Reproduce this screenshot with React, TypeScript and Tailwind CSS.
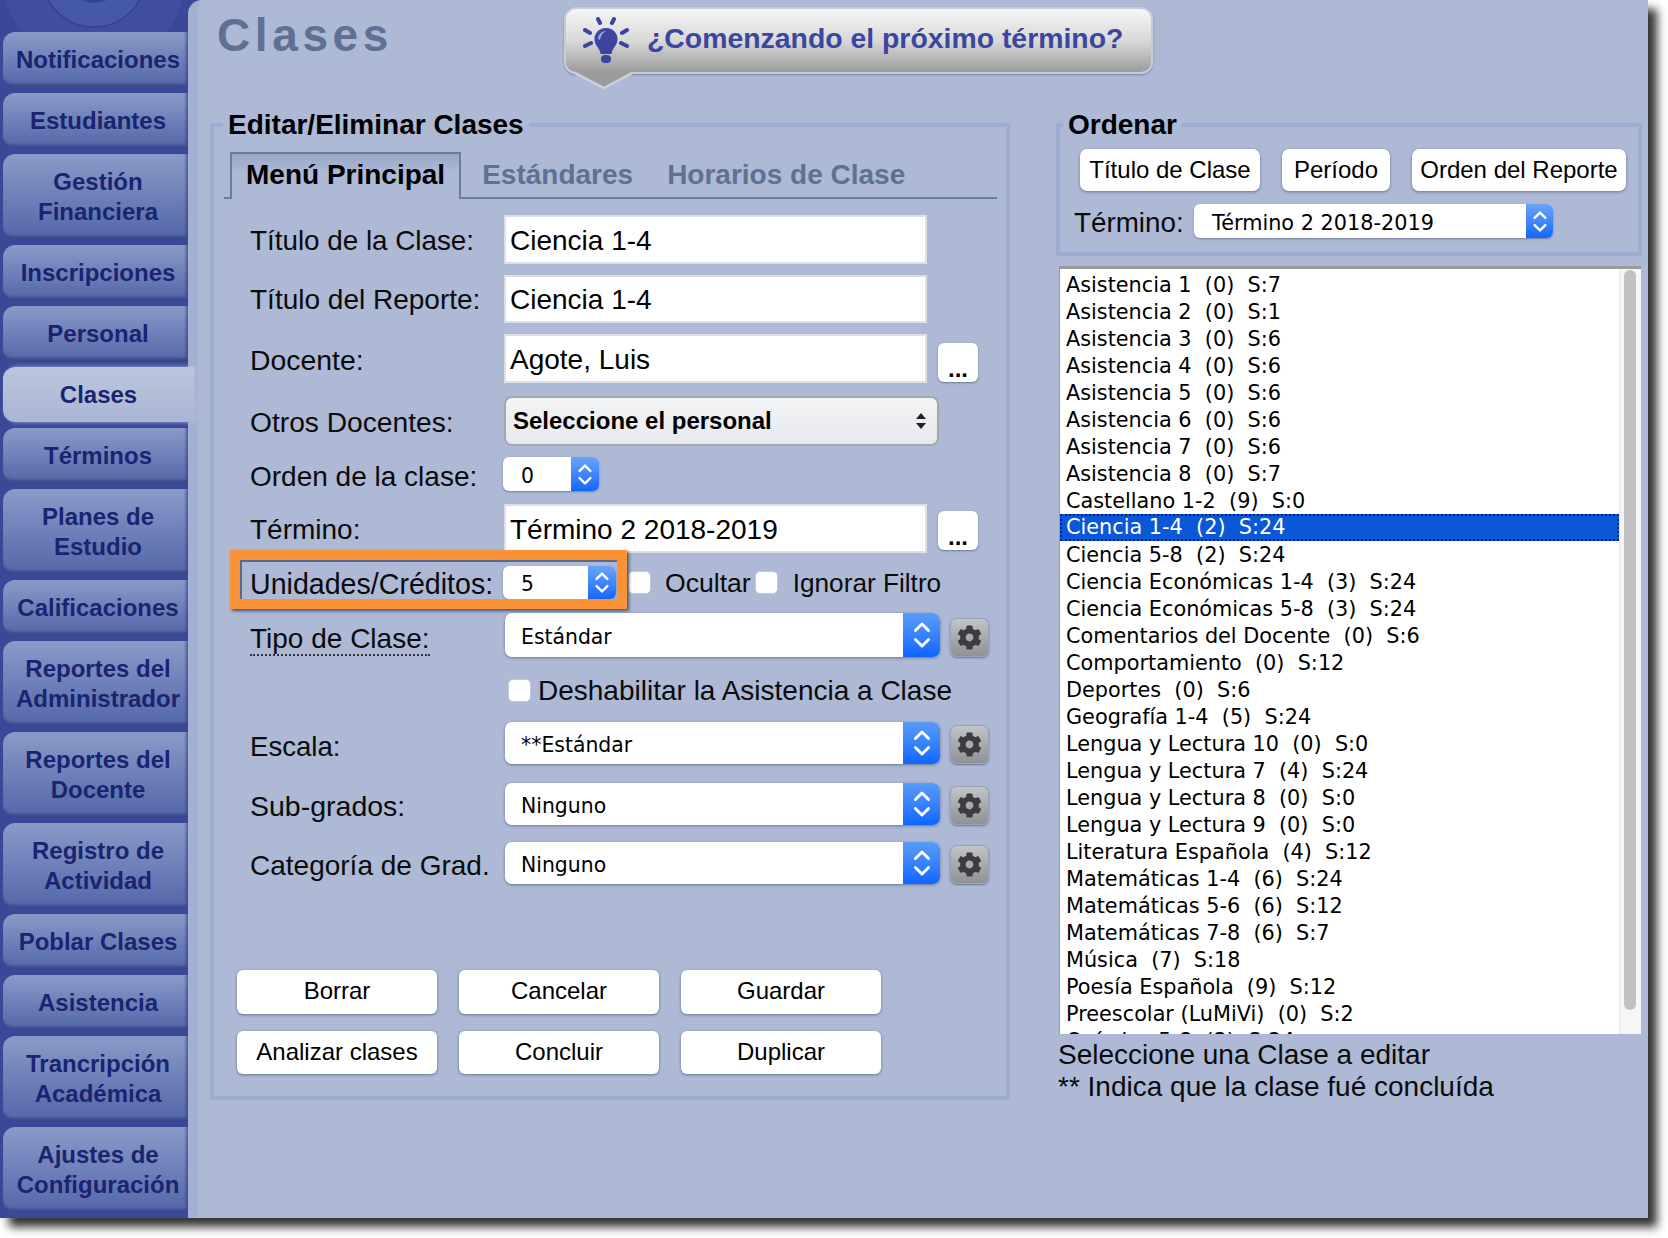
import React from "react";
import { FaCog } from "react-icons/fa";

const NAV: { label: string[]; active?: boolean }[] = [
  { label: ["Notificaciones"] },
  { label: ["Estudiantes"] },
  { label: ["Gestión", "Financiera"] },
  { label: ["Inscripciones"] },
  { label: ["Personal"] },
  { label: ["Clases"], active: true },
  { label: ["Términos"] },
  { label: ["Planes de", "Estudio"] },
  { label: ["Calificaciones"] },
  { label: ["Reportes del", "Administrador"] },
  { label: ["Reportes del", "Docente"] },
  { label: ["Registro de", "Actividad"] },
  { label: ["Poblar Clases"] },
  { label: ["Asistencia"] },
  { label: ["Trancripción", "Académica"] },
  { label: ["Ajustes de", "Configuración"] },
];

const LIST = [
  "Asistencia 1  (0)  S:7",
  "Asistencia 2  (0)  S:1",
  "Asistencia 3  (0)  S:6",
  "Asistencia 4  (0)  S:6",
  "Asistencia 5  (0)  S:6",
  "Asistencia 6  (0)  S:6",
  "Asistencia 7  (0)  S:6",
  "Asistencia 8  (0)  S:7",
  "Castellano 1-2  (9)  S:0",
  "Ciencia 1-4  (2)  S:24",
  "Ciencia 5-8  (2)  S:24",
  "Ciencia Económicas 1-4  (3)  S:24",
  "Ciencia Económicas 5-8  (3)  S:24",
  "Comentarios del Docente  (0)  S:6",
  "Comportamiento  (0)  S:12",
  "Deportes  (0)  S:6",
  "Geografía 1-4  (5)  S:24",
  "Lengua y Lectura 10  (0)  S:0",
  "Lengua y Lectura 7  (4)  S:24",
  "Lengua y Lectura 8  (0)  S:0",
  "Lengua y Lectura 9  (0)  S:0",
  "Literatura Española  (4)  S:12",
  "Matemáticas 1-4  (6)  S:24",
  "Matemáticas 5-6  (6)  S:12",
  "Matemáticas 7-8  (6)  S:7",
  "Música  (7)  S:18",
  "Poesía Española  (9)  S:12",
  "Preescolar (LuMiVi)  (0)  S:2",
  "Química 5-8  (3)  S:24",
];

function Chevrons({ small }: { small?: boolean }) {
  return (
    <svg
      viewBox="0 0 20 28"
      className={small ? "h-[25px] w-[18px]" : "h-[32px] w-[22px]"}
      fill="none"
      stroke="white"
      strokeWidth="2.6"
      strokeLinecap="round"
      strokeLinejoin="round"
    >
      <polyline points="4,10 10,4 16,10" />
      <polyline points="4,18 10,24 16,18" />
    </svg>
  );
}

function Spin({ value, className }: { value: string; className: string }) {
  return (
    <div className={`flex h-full rounded-[6px] bg-white shadow-[0_1px_2px_rgba(40,50,90,0.45)] ${className}`}>
      <div className="flex-1 self-center pt-[4px] pl-[18px] text-[20.4px] leading-none font-['DejaVu_Sans',sans-serif] text-black">
        {value}
      </div>
      <div className="flex w-[28px] items-center justify-center rounded-r-[6px] bg-linear-to-b from-[#6aa3f8] to-[#0f66fb]">
        <Chevrons small />
      </div>
    </div>
  );
}

function Select({ value }: { value: string }) {
  return (
    <div className="ml-[1px] flex h-full w-[435px] rounded-[7px] bg-white shadow-[0_1px_3px_rgba(40,50,90,0.5)]">
      <div className="flex-1 self-center pt-[5px] pl-[16px] text-[20.4px] font-['DejaVu_Sans',sans-serif] text-black">
        {value}
      </div>
      <div className="flex w-[37px] items-center justify-center rounded-r-[7px] bg-linear-to-b from-[#5a9bf8] to-[#0a66ff]">
        <Chevrons />
      </div>
    </div>
  );
}

function Gear() {
  return (
    <div className="ml-[10px] flex h-[39px] w-[39px] shrink-0 items-center justify-center self-end rounded-[7px] border border-[#98a2b8] bg-linear-to-b from-[#c2c4c8] to-[#8f9195] shadow-[0_1px_2px_rgba(40,50,90,0.5)]">
      <FaCog className="text-[#3c3c3e]" size={25} />
    </div>
  );
}

function DotsButton({ className }: { className: string }) {
  return (
    <div className={`ml-[11px] flex h-[39px] w-[40px] items-end justify-center rounded-[6px] bg-white text-[24px] leading-[26px] font-bold text-black shadow-[0_1px_2px_rgba(40,50,90,0.5)] ${className}`}>
      ...
    </div>
  );
}

function Field({ value }: { value: string }) {
  return (
    <div className="flex h-full w-[423px] items-center border-2 border-[#dcdfe6] bg-white pt-[2px] pl-[4px] text-[28px] text-black">
      {value}
    </div>
  );
}

function Label({ children, className = "text-[28px]" }: { children: React.ReactNode; className?: string }) {
  return <div className={`w-[254px] shrink-0 pt-[2px] leading-[32px] whitespace-nowrap text-[#0b0b0b] ${className}`}>{children}</div>;
}

function Check({ className = "" }: { className?: string }) {
  return <div className={`h-[23px] w-[23px] shrink-0 rounded-[5px] border border-[#c3c9d8] bg-white ${className}`} />;
}

function ActionButton({ children }: { children: string }) {
  return (
    <div className="flex h-full w-[200px] items-center justify-center rounded-[6px] bg-white pb-[2px] text-[24px] text-black shadow-[0_1px_3px_rgba(40,50,90,0.5)]">
      {children}
    </div>
  );
}

function SortButton({ children, className }: { children: string; className: string }) {
  return (
    <div className={`flex h-[42px] items-center justify-center rounded-[7px] bg-white pb-[1px] text-[24px] text-black shadow-[0_1px_3px_rgba(40,50,90,0.5)] ${className}`}>
      {children}
    </div>
  );
}

function Bulb() {
  return (
    <svg viewBox="0 0 46 47" className="h-[47px] w-[46px] shrink-0" fill="#3b45a0">
      <g stroke="#3b45a0" strokeWidth="4" strokeLinecap="round">
        <line x1="15" y1="2" x2="17" y2="6" />
        <line x1="31" y1="2" x2="29" y2="6" />
        <line x1="2" y1="13" x2="7" y2="16" />
        <line x1="44" y1="13" x2="39" y2="16" />
        <line x1="2" y1="29" x2="8" y2="26" />
        <line x1="44" y1="29" x2="38" y2="26" />
      </g>
      <path d="M23 11c-7 0-11.500 5-11.500 11 0 5 3 7.500 4.500 10.500 1 1.500 1.500 3 1.500 4.500h11c0-1.500.5-3 1.500-4.500 1.500-3 4.500-5.500 4.500-10.500 0-6-4.500-11-11.500-11z" />
      <path d="M15 22c0-4 3.500-8 8-8-3 2-5.500 4.500-6 9z" fill="#9ba3dc" />
      <rect x="18" y="38" width="10" height="8" rx="4" />
    </svg>
  );
}

function Legend({ children, className }: { children: string; className: string }) {
  return <legend className={`px-[5px] text-[28px] leading-[30px] font-bold text-black ${className}`}>{children}</legend>;
}

export default function App() {
  return (
    <div className="h-[1238px] w-[1668px] overflow-hidden bg-white font-['Liberation_Sans',Arial,sans-serif]">
      <div className="flex h-[1218px] w-[1648px] bg-[#3a4898] shadow-[9px_9px_9px_rgba(0,0,0,0.8)]">
        {/* Sidebar */}
        <nav className="relative flex w-[188px] shrink-0 flex-col gap-[6px] overflow-visible pt-[32px] pl-[3px]">
          <svg viewBox="0 0 188 32" className="absolute top-0 left-0 h-[32px] w-[188px]">
            <circle cx="94" cy="-25" r="92" fill="#3f4e9f" />
            <circle cx="94" cy="-25" r="52" fill="#4658a8" stroke="#34428f" strokeWidth="1.5" />
            <circle cx="94" cy="-25" r="28" fill="#34428f" />
          </svg>
          {NAV.map((n) => (
            <div
              key={n.label.join(" ")}
              className={
                n.active
                  ? "relative z-10 flex h-[55px] w-[191px] flex-col items-center justify-center rounded-l-[12px] bg-linear-to-b from-[#bcc6de] to-[#a9b6d4] text-center text-[24px] leading-[30px] font-bold text-[#1a2470] shadow-[3px_0_5px_rgba(173,185,213,0.9)]"
                  : n.label.length > 1
                    ? "relative flex h-[85px] w-[185px] flex-col items-center justify-center rounded-l-[12px] bg-linear-to-b from-[#8a9ac8] to-[#5367a8] pl-[5px] text-center text-[24px] leading-[30px] font-bold text-[#1a2470] shadow-[inset_-2px_-3px_3px_rgba(35,45,110,0.55)]"
                    : "relative flex h-[55px] w-[185px] flex-col items-center justify-center rounded-l-[12px] bg-linear-to-b from-[#8a9ac8] to-[#5367a8] pl-[5px] text-center text-[24px] leading-[30px] font-bold text-[#1a2470] shadow-[inset_-2px_-3px_3px_rgba(35,45,110,0.55)]"
              }
            >
              {n.label.map((l) => (
                <span key={l}>{l}</span>
              ))}
            </div>
          ))}
        </nav>

        {/* Main */}
        <main className="flex-1 rounded-tl-[14px] border-l-[10px] border-[#a3b0d2] bg-[#adb9d5] pl-[12px]">
          <header className="flex h-[110px] pt-[7px]">
            <h1 className="ml-[7px] w-[347px] pt-[1px] text-[46px] leading-[55px] font-bold tracking-[4.6px] text-[#5f7193]">Clases</h1>
            <div className="relative flex h-[67px] w-[589px] items-center rounded-[12px] border-2 border-[#c6ccda] bg-linear-to-b from-[#f6f6f6] via-[#d9d9d9] to-[#9c9c9c] pl-[17px] shadow-[0_1px_2px_rgba(60,70,110,0.45)]">
              <Bulb />
              <span className="mb-[5px] ml-[18px] text-[28.4px] font-bold whitespace-nowrap text-[#3a46a0]">¿Comenzando el próximo término?</span>
              <svg viewBox="0 0 57 18" className="absolute top-[63px] left-[9px] h-[18px] w-[57px]">
                <polygon points="0,0 57,0 29,16" fill="#9c9c9c" />
                <polyline points="0,1 29,16 57,1" fill="none" stroke="#ccd1dc" strokeWidth="2.5" />
              </svg>
            </div>
          </header>

          <div className="flex gap-[46px]">
            {/* Left column */}
            <fieldset className="h-[990px] w-[800px] border-4 border-[#9eacd1]">
              <Legend className="ml-[9px]">Editar/Eliminar Clases</Legend>

              <div className="mt-[14px] mr-[9px] ml-[10px] flex h-[45px] items-end gap-[21px] border-b-2 border-[#6b7c9e] pl-[6px] text-[28px] font-bold text-[#5f7193]">
                <div className="-mb-[2px] flex h-[47px] items-center border-2 border-b-0 border-[#6b7c9e] bg-linear-to-b from-[#98a6c6] to-[#adb9d5] to-40% pr-[14px] pb-[3px] pl-[14px] text-black">
                  Menú Principal
                </div>
                <div className="flex h-[45px] items-center">Estándares</div>
                <div className="ml-[13px] flex h-[45px] items-center">Horarios de Clase</div>
              </div>

              <div className="pl-[36px]">
                <div className="mt-[16px] flex h-[49px] items-center">
                  <Label className="text-[27.8px]">Título de la Clase:</Label>
                  <Field value="Ciencia 1-4" />
                </div>
                <div className="mt-[11px] flex h-[48px] items-center">
                  <Label>Título del Reporte:</Label>
                  <Field value="Ciencia 1-4" />
                </div>
                <div className="mt-[11px] flex h-[49px] items-center">
                  <Label className="text-[28.4px]">Docente:</Label>
                  <Field value="Agote, Luis" />
                  <DotsButton className="mt-[8px]" />
                </div>
                <div className="mt-[13px] flex h-[50px] items-center">
                  <Label className="text-[28.2px]">Otros Docentes:</Label>
                  <div className="flex h-full w-[435px] items-center justify-between rounded-[8px] border-2 border-[#a4a7ae] bg-linear-to-b from-[#f3f4f6] to-[#e8e9ec] pr-[10px] pl-[7px] text-[24px] font-bold text-black">
                    <span>Seleccione el personal</span>
                    <svg viewBox="0 0 12 18" className="h-[18px] w-[12px]" fill="#222">
                      <polygon points="6,1 11,7 1,7" />
                      <polygon points="6,17 11,11 1,11" />
                    </svg>
                  </div>
                </div>
                <div className="mt-[11px] flex h-[34px] items-center">
                  <Label className="pt-[5px] text-[28px]">Orden de la clase:</Label>
                  <Spin value="0" className="-ml-[1px] w-[96px]" />
                </div>
                <div className="mt-[13px] flex h-[49px] items-center">
                  <Label>Término:</Label>
                  <Field value="Término 2 2018-2019" />
                  <DotsButton className="mt-[4px]" />
                </div>
                <div className="relative mt-[13px] flex h-[33px] items-center">
                  <div className="pointer-events-none absolute -top-[16px] -left-[20px] z-10 h-[59px] w-[397px] border-[10px] border-[#fa9338] shadow-[2px_2px_3px_rgba(30,40,70,0.7),inset_2px_2px_0_#5a6a8c]" />
                  <Label className="text-[28.6px]">Unidades/Créditos:</Label>
                  <Spin value="5" className="-ml-[1px] w-[113px]" />
                  <Check className="ml-[12px]" />
                  <span className="ml-[14px] pt-[2px] text-[26.6px] text-[#0b0b0b]">Ocultar</span>
                  <Check className="ml-[4px]" />
                  <span className="ml-[15px] pt-[2px] text-[26.2px] text-[#0b0b0b]">Ignorar Filtro</span>
                </div>
                <div className="mt-[14px] flex h-[44px] items-center">
                  <Label className="pt-[7px] text-[28px]">
                    <span className="border-b-2 border-dotted border-[#333]">Tipo de Clase:</span>
                  </Label>
                  <Select value="Estándar" />
                  <Gear />
                </div>
                <div className="mt-[22px] flex h-[23px] items-center pl-[258px]">
                  <Check />
                  <span className="ml-[7px] pt-[1px] text-[28px] whitespace-nowrap text-[#0b0b0b]">Deshabilitar la Asistencia a Clase</span>
                </div>
                <div className="mt-[20px] flex h-[42px] items-center">
                  <Label className="pt-[7px] text-[27.6px]">Escala:</Label>
                  <Select value="**Estándar" />
                  <Gear />
                </div>
                <div className="mt-[19px] flex h-[42px] items-center">
                  <Label className="pt-[3px] text-[28.5px]">Sub-grados:</Label>
                  <Select value="Ninguno" />
                  <Gear />
                </div>
                <div className="mt-[17px] flex h-[42px] items-center">
                  <Label className="pt-[5px] text-[28px]">Categoría de Grad.</Label>
                  <Select value="Ninguno" />
                  <Gear />
                </div>
              </div>

              <div className="mt-[86px] ml-[23px] flex h-[44px] gap-[22px]">
                <ActionButton>Borrar</ActionButton>
                <ActionButton>Cancelar</ActionButton>
                <ActionButton>Guardar</ActionButton>
              </div>
              <div className="mt-[17px] ml-[23px] flex h-[43px] gap-[22px]">
                <ActionButton>Analizar clases</ActionButton>
                <ActionButton>Concluir</ActionButton>
                <ActionButton>Duplicar</ActionButton>
              </div>
            </fieldset>

            {/* Right column */}
            <div className="w-[586px]">
              <fieldset className="h-[146px] border-4 border-[#9eacd1]">
                <Legend className="ml-[3px]">Ordenar</Legend>
                <div className="mt-[9px] ml-[20px] flex gap-[22px]">
                  <SortButton className="w-[180px]">Título de Clase</SortButton>
                  <SortButton className="w-[108px]">Período</SortButton>
                  <SortButton className="w-[214px]">Orden del Reporte</SortButton>
                </div>
                <div className="mt-[13px] ml-[14px] flex h-[34px] items-center">
                  <div className="w-[120px] pt-[3px] text-[27.8px] text-[#0b0b0b]">Término:</div>
                  <div className="flex h-full w-[359px] rounded-[6px] bg-white shadow-[0_1px_2px_rgba(40,50,90,0.45)]">
                    <div className="flex-1 self-center pt-[5px] pl-[18px] text-[20.8px] font-['DejaVu_Sans',sans-serif] text-black">Término 2 2018-2019</div>
                    <div className="flex w-[27px] items-center justify-center rounded-r-[6px] bg-linear-to-b from-[#6aa3f8] to-[#0f66fb]">
                      <Chevrons small />
                    </div>
                  </div>
                </div>
              </fieldset>

              <div className="mt-[10px] ml-[3px] flex h-[768px] w-[582px] overflow-hidden border-t-[3px] border-l border-[#9a9a9a] bg-white">
                <div className="flex-1 overflow-hidden pt-[1.5px] font-['DejaVu_Sans',sans-serif] text-[20.8px] text-black">
                  {LIST.map((row) => (
                    <div
                      key={row}
                      className={
                        row === "Ciencia 1-4  (2)  S:24"
                          ? "flex h-[27px] items-center border-2 border-dotted border-[#0a1f8f] bg-[#0a57d8] pt-[1px] pl-[4px] whitespace-pre text-white"
                          : "flex h-[27px] items-center pt-[3px] pl-[6px] whitespace-pre"
                      }
                    >
                      {row}
                    </div>
                  ))}
                </div>
                <div className="w-[22px] shrink-0 border-l border-[#e8e8e8] bg-[#f6f6f6] pt-[1px] pl-[4px]">
                  <div className="h-[740px] w-[12px] rounded-full bg-[#c1c1c1]" />
                </div>
              </div>

              <div className="mt-[5px] ml-[2px] text-[28px] leading-[32px] text-[#0b0b0b]">
                <p>Seleccione una Clase a editar</p>
                <p>** Indica que la clase fué concluída</p>
              </div>
            </div>
          </div>
        </main>
      </div>
    </div>
  );
}
